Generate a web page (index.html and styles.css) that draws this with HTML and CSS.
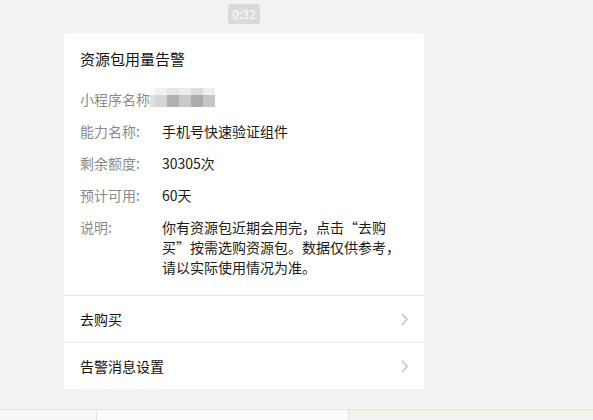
FILE: index.html
```html
<!DOCTYPE html>
<html lang="zh-CN">
<head>
<meta charset="utf-8">
<title>资源包用量告警</title>
<link rel="stylesheet" href="styles.css">
</head>
<body>
<div class="page">
  <div class="time-row"><span class="time">0:32</span></div>
  <div class="card">
    <div class="card-body">
      <div class="title">资源包用量告警</div>
      <div class="rows">
        <div class="row">
          <div class="label">小程序名称:</div>
          <div class="mosaic" aria-hidden="true">
            <i class="m1a"></i><i class="m1b"></i><i class="m1c"></i><i class="m1d"></i><i class="m1e"></i><i class="m1f"></i>
            <i class="m2a"></i><i class="m2b"></i><i class="m2c"></i><i class="m2d"></i><i class="m2e"></i><i class="m2f"></i>
          </div>
        </div>
        <div class="row">
          <div class="label">能力名称:</div>
          <div class="value">手机号快速验证组件</div>
        </div>
        <div class="row">
          <div class="label">剩余额度:</div>
          <div class="value">30305次</div>
        </div>
        <div class="row">
          <div class="label">预计可用:</div>
          <div class="value">60天</div>
        </div>
        <div class="row">
          <div class="label">说明:</div>
          <div class="value desc">你有资源包近期会用完，点击<span class="q">“</span>去购<br>买<span class="q">”</span>按需选购资源包。数据仅供参考，<br>请以实际使用情况为准。</div>
        </div>
      </div>
    </div>
    <div class="link">
      <span>去购买</span>
      <svg class="chev" width="7" height="13" viewBox="0 0 7 13"><polyline points="0.8,0.8 6.2,6.5 0.8,12.2" fill="none" stroke="#b4b4b4" stroke-width="1.1"/></svg>
    </div>
    <div class="link">
      <span>告警消息设置</span>
      <svg class="chev" width="7" height="13" viewBox="0 0 7 13"><polyline points="0.8,0.8 6.2,6.5 0.8,12.2" fill="none" stroke="#b4b4b4" stroke-width="1.1"/></svg>
    </div>
  </div>
  <div class="spacer"></div>
  <div class="bottom">
    <div class="b1"></div>
    <div class="b2"></div>
    <div class="b3"></div>
  </div>
</div>
</body>
</html>
```
FILE: styles.css
```css
html, body {
  margin: 0;
  padding: 0;
  background: #f3f3f3;
}
body {
  font-family: "Noto Sans CJK SC", "Microsoft YaHei", sans-serif;
  font-size: 14px;
  color: #1a1a1a;
  height: 420px;
  overflow: hidden;
}
.page {
  display: flex;
  flex-direction: column;
  height: 420px;
}
.time-row {
  padding-top: 4px;
  padding-left: 228px;
  height: 33px;
  box-sizing: border-box;
}
.time {
  display: block;
  width: 32px;
  height: 20px;
  line-height: 20px;
  text-align: center;
  background: #dadada;
  color: #fff;
  font-size: 12px;
  border-radius: 2px;
}
.card {
  margin-left: 64px;
  width: 360px;
  background: #fff;
  border-radius: 2px;
}
.card-body {
  padding: 15px 16px 18px 16px;
}
.title {
  font-size: 15px;
  line-height: 22px;
  color: #111;
}
.rows {
  margin-top: 19px;
  display: flex;
  flex-direction: column;
  gap: 12px;
}
.row {
  display: flex;
  line-height: 20px;
  position: relative;
}
.label {
  width: 82px;
  flex: none;
  color: #8a8a8a;
}
.value {
  color: #1a1a1a;
  flex: 1;
}
.desc {
  white-space: nowrap;
}
.q {
  font-feature-settings: "fwid" 1;
}
.mosaic {
  position: absolute;
  left: 70px;
  top: -1px;
  display: grid;
  grid-template-columns: 5px 12px 12px 12px 12px 12px;
  grid-template-rows: 7px 12px;
}
.mosaic i { display: block; }
.m1a { background: #fbfbfb; }
.m1b { background: #f0f0f0; }
.m1c { background: #e6e6e6; }
.m1d { background: #ebebeb; }
.m1e { background: #dcdcdc; }
.m1f { background: #eeeeee; }
.m2a { background: #e0e0e0; }
.m2b { background: #d5d5d5; }
.m2c { background: #b0b0b0; }
.m2d { background: #c9c9c9; }
.m2e { background: #acacac; }
.m2f { background: #c6c6c6; }
.link {
  border-top: 1px solid #e6e6e6;
  height: 46px;
  padding: 0 16px;
  display: flex;
  align-items: center;
  justify-content: space-between;
  color: #111;
}
.chev { display: block; }
.spacer { flex: 1; }
.bottom {
  height: 10px;
  border-top: 1px solid #e2e2e2;
  display: flex;
}
.b1 { width: 96px; background: #f8f8f8; border-right: 1px solid #e2e2e2; }
.b2 { width: 251px; background: #fafafa; border-right: 1px solid #e2e2e2; }
.b3 { flex: 1; background: #f2f2ef; }
```
